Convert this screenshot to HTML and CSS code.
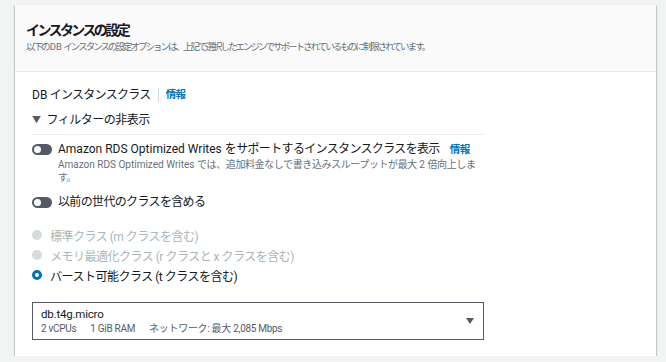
FILE: index.html
```html
<!DOCTYPE html>
<html lang="ja">
<head>
<meta charset="utf-8">
<link rel="stylesheet" href="styles.css">
</head>
<body>
<div class="card">
  <div class="card-header">
    <h2 class="title">インスタンスの設定</h2>
    <p class="subtitle">以下の <span class="en">DB</span> インスタンスの設定オプションは、上記で選択したエンジンでサポートされているものに制限されています。</p>
  </div>
  <div class="card-body">
    <div class="field-label">
      <span><span class="en">DB</span> インスタンスクラス</span>
      <span class="divider"></span>
      <a class="info">情報</a>
    </div>
    <div class="filter-toggle"><span class="caret-down">▼</span>フィルターの非表示</div>
    <div class="filters">
      <div class="toggle-row">
        <span class="toggle"><span class="knob"></span></span>
        <div class="toggle-text">
          <div class="toggle-label"><span class="en">Amazon RDS Optimized Writes </span>をサポートするインスタンスクラスを表示<a class="info info-gap">情報</a></div>
          <div class="toggle-desc"><span class="en">Amazon RDS Optimized Writes </span>では、追加料金なしで書き込みスループットが最大<span class="en"> 2 </span>倍向上します。</div>
        </div>
      </div>
      <div class="toggle-row row2">
        <span class="toggle"><span class="knob"></span></span>
        <div class="toggle-text">
          <div class="toggle-label">以前の世代のクラスを含める</div>
        </div>
      </div>
    </div>
    <div class="radios">
      <div class="radio disabled"><span class="dot"></span>標準クラス (m クラスを含む)</div>
      <div class="radio disabled"><span class="dot"></span>メモリ最適化クラス (r クラスと x クラスを含む)</div>
      <div class="radio checked"><span class="dot"></span>バースト可能クラス (t クラスを含む)</div>
    </div>
    <div class="select">
      <div class="select-text">
        <div class="select-value">db.t4g.micro</div>
        <div class="select-meta"><span>2 vCPUs</span><span>1 GiB RAM</span><span>ネットワーク: 最大 2,085 Mbps</span></div>
      </div>
      <span class="select-caret"></span>
    </div>
  </div>
</div>
</body>
</html>
```
FILE: styles.css
```css
* { box-sizing: border-box; }
html, body { margin: 0; padding: 0; }
body {
  background: #f2f3f3;
  font-family: Roboto, "Noto Sans CJK JP", sans-serif;
  color: #16191f;
  padding: 5px 10px 0 15px;
}
.en { letter-spacing: 0; }
.card {
  width: 641px;
  background: #fff;
  box-shadow: 0 1px 1px 0 rgba(0,28,36,.3), 1px 1px 1px 0 rgba(0,28,36,.15), -1px 1px 1px 0 rgba(0,28,36,.15);
}
.card-header {
  background: #fafafa;
  border-bottom: 1px solid #eaeded;
  padding: 15px 11px 17px;
}
.title {
  margin: 0;
  font-size: 14px;
  line-height: 20px;
  font-weight: 700;
  letter-spacing: -2.6px;
}
.subtitle {
  margin: 0;
  font-size: 9.5px;
  line-height: 14px;
  color: #687078;
  letter-spacing: -2px;
  white-space: nowrap;
}
.subtitle .en { letter-spacing: 0; margin: 0 1px; }
.card-body {
  padding: 13px 17px 16px;
}
.field-label {
  display: flex;
  align-items: center;
  font-size: 12px;
  line-height: 16px;
  letter-spacing: -0.7px;
  margin-top: 2px;
}
.divider {
  width: 1px;
  height: 14px;
  background: #d5dbdb;
  margin: 0 7px 0 7px;
}
.info {
  color: #0073bb;
  font-weight: 700;
  font-size: 10.5px;
  letter-spacing: -0.5px;
}
.filter-toggle {
  margin-top: 9px;
  font-size: 12px;
  line-height: 16px;
  letter-spacing: -0.5px;
  width: 452px;
  padding-bottom: 5px;
  border-bottom: 1px solid #eaeded;
}
.caret-down {
  font-size: 9px;
  margin-right: 6px;
  color: #545b64;
  position: relative;
  top: -1px;
}
.filters { width: 452px; }
.toggle-row {
  display: flex;
  align-items: flex-start;
  margin-top: 6px;
}
.toggle-row.row2 { margin-top: 10px; }
.toggle {
  flex: none;
  width: 20px;
  height: 11px;
  border-radius: 6px;
  background: #545b64;
  position: relative;
  margin-top: 3px;
  margin-right: 6px;
}
.knob {
  position: absolute;
  left: 2px;
  top: 2px;
  width: 7px;
  height: 7px;
  border-radius: 50%;
  background: #fff;
}
.toggle-label {
  font-size: 12px;
  line-height: 16px;
  letter-spacing: -0.65px;
}
.info-gap { margin-left: 10px; }
.toggle-desc {
  width: 419px;
  font-size: 10px;
  line-height: 13px;
  color: #687078;
  letter-spacing: -0.4px;
}
.radios {
  margin-top: 15px;
}
.radio {
  display: flex;
  align-items: center;
  height: 20px;
  font-size: 12px;
  letter-spacing: -0.5px;
}
.dot {
  width: 10px;
  height: 10px;
  border-radius: 50%;
  margin-right: 8px;
  flex: none;
}
.radio.disabled { color: #aab7b8; }
.radio.disabled .dot { background: #d5dbdb; }
.radio.checked .dot {
  border: 3px solid #0073bb;
  background: #fff;
}
.select {
  margin-top: 17px;
  width: 452px;
  height: 38px;
  border: 1px solid #545b64;
  display: flex;
  align-items: center;
  padding: 0 9px 0 8px;
}
.select-text { flex: 1; }
.select-value {
  font-size: 11.5px;
  line-height: 15px;
  letter-spacing: -0.2px;
}
.select-meta {
  font-size: 10px;
  line-height: 14px;
  color: #545b64;
  display: flex;
  gap: 14px;
  letter-spacing: -0.3px;
}
.select-caret {
  width: 0;
  height: 0;
  border-left: 4.5px solid transparent;
  border-right: 4.5px solid transparent;
  border-top: 6px solid #545b64;
}
```
